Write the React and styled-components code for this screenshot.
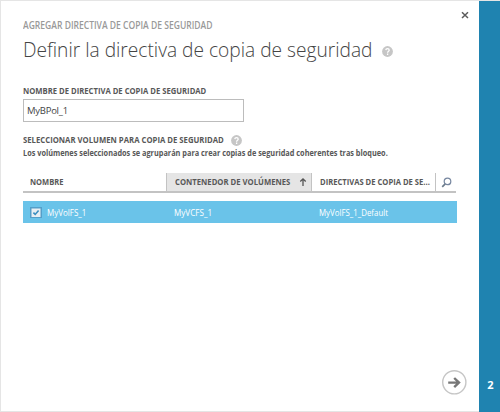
import React from 'react';
import styled, { createGlobalStyle } from 'styled-components';

const GlobalStyle = createGlobalStyle`
  * { box-sizing: border-box; }
  body { margin: 0; background: #fff; font-family: "Open Sans", "Noto Sans", sans-serif; color: #585858; }
`;

const Dialog = styled.div`
  display: flex;
  width: 500px;
  height: 412px;
  overflow: hidden;
  background: #fff;
  border-top: 1px solid #e5e5e5;
`;

const Main = styled.main`
  position: relative;
  flex: 1;
  min-width: 0;
  display: flex;
  flex-direction: column;
  padding: 17px 22px 0 22px;
  border: solid #e5e5e5;
  border-width: 0 0 1px 1px;
`;

const StepRail = styled.aside`
  width: 21px;
  display: flex;
  align-items: flex-end;
  justify-content: center;
  padding: 0 0 19px 2px;
  background: #1f83b0;
  color: #fff;
  font-size: 11px;
  line-height: 16px;
  font-weight: 700;
`;

/* Condensed run of text: $scale narrows the glyphs, $width is the room kept for it. */
const Fit = styled.span`
  display: inline-block;
  width: ${p => (p.$width ? `${p.$width}px` : 'auto')};
  white-space: nowrap;
  transform-origin: 0 50%;
  transform: scaleX(${p => p.$scale || 1});
`;

const Eyebrow = styled.div`
  height: 14px;
  font-size: 10px;
  line-height: 14px;
  font-weight: 600;
  color: #999;
`;

const Title = styled.h1`
  display: flex;
  align-items: center;
  height: 32px;
  margin: 1px 0 0;
  font-size: 21px;
  line-height: 32px;
  font-weight: 300;
  color: #444;

  svg { margin-top: 5px; }
`;

const Label = styled.label`
  height: 14px;
  margin-top: ${p => p.$top}px;
  display: flex;
  align-items: center;
  gap: 7px;
  font-size: 8px;
  line-height: 14px;
  font-weight: 700;
`;

const NameInput = styled.input`
  width: 221px;
  height: 23px;
  margin-top: 1px;
  padding: 0 3px;
  border: 1px solid #bcbcbc;
  border-radius: 0;
  outline: 0;
  font: 9.5px "Open Sans", sans-serif;
  letter-spacing: -0.25px;
  color: #444;
`;

const Hint = styled.p`
  margin: 0;
  height: 12px;
  font-size: 8px;
  line-height: 12px;
  font-weight: 700;
`;

const HeaderRow = styled.div`
  display: grid;
  grid-template-columns: 143px 146px 123px 21px;
  width: 433px;
  height: 20px;
  margin-top: 14px;
  border-bottom: 2px solid #c3c3c3;
`;

const HeaderCell = styled.div`
  display: flex;
  align-items: center;
  justify-content: space-between;
  padding: 0 4px 0 ${p => p.$left}px;
  background: ${p => (p.$sorted ? '#e5e5e5' : 'transparent')};
  border: solid #c3c3c3;
  border-width: 0 ${p => (p.$sorted ? 1 : 0)}px 0 ${p => (p.$divided ? 1 : 0)}px;
  font-size: 8px;
  line-height: 18px;
  font-weight: 700;
  white-space: nowrap;

  svg { flex: none; }
`;

const DataRow = styled.div`
  display: grid;
  grid-template-columns: 143px 145px 1fr;
  width: 434px;
  height: 22px;
  margin-top: 8px;
  background: #6ac3e9;
  color: #fff;
`;

const DataCell = styled.div`
  display: flex;
  align-items: center;
  gap: 5px;
  padding: 1px 0 0 ${p => p.$left}px;
  font-size: 9px;
  line-height: 20px;
`;

const CloseButton = styled.button`
  position: absolute;
  top: 9px;
  right: 9px;
  width: 10px;
  height: 10px;
  padding: 0;
  border: 0;
  background: none;
  line-height: 0;
`;

const NextButton = styled.button`
  align-self: flex-end;
  width: 26px;
  height: 26px;
  margin: auto -10px 16px 0;
  padding: 0;
  border: 0;
  background: none;
  line-height: 0;
`;

const HelpIcon = () => (
  <svg width="11" height="11" viewBox="0 0 11 11">
    <circle cx="5.5" cy="5.5" r="5.4" fill="#c6c6c6" />
    <path d="M3.8 4.1C3.9 2.2 7.2 2.2 7.2 4.2C7.2 5.3 5.6 5.3 5.6 6.7M5.6 7.5V8.9" fill="none" stroke="#fff" strokeWidth="1.3" />
  </svg>
);

const CloseIcon = () => (
  <svg width="10" height="10" viewBox="0 0 10 10">
    <path d="M2 2.2L8 8M8 2.2L2 8" stroke="#5c5c5c" strokeWidth="1.5" />
  </svg>
);

const SortIcon = () => (
  <svg width="8" height="10" viewBox="0 0 8 10">
    <path d="M4 9V2M1.3 4.5L4 1.8L6.7 4.5" fill="none" stroke="#555" strokeWidth="1.3" />
  </svg>
);

const SearchIcon = () => (
  <svg width="11" height="11" viewBox="0 0 11 11">
    <circle cx="6.5" cy="4.4" r="3.3" fill="none" stroke="#7787a0" strokeWidth="1.2" />
    <path d="M4.2 6.8L1.2 9.8" stroke="#6d7c8c" strokeWidth="1.7" />
  </svg>
);

const CheckIcon = () => (
  <svg width="12" height="12" viewBox="0 0 12 12">
    <rect width="12" height="11" fill="#559fc9" />
    <rect x="1.5" y="1.5" width="9" height="8.5" fill="#e9eff3" />
    <path d="M3.4 5.6L5.2 7.4L8.6 3.4" fill="none" stroke="#3b8fc0" strokeWidth="1.6" />
  </svg>
);

const NextIcon = () => (
  <svg width="26" height="26" viewBox="0 0 26 26">
    <circle cx="13.3" cy="13.3" r="11.6" fill="#fff" stroke="#c6c6c6" strokeWidth="1.4" />
    <path d="M7.2 13.6H18M13.2 9L18 13.6L13.2 18.2" fill="none" stroke="#777" strokeWidth="2.4" />
  </svg>
);

export default function App() {
  return (
    <>
      <GlobalStyle />
      <Dialog>
        <Main>
          <CloseButton aria-label="Cerrar"><CloseIcon /></CloseButton>
          <Eyebrow><Fit $scale={0.855}>AGREGAR DIRECTIVA DE COPIA DE SEGURIDAD</Fit></Eyebrow>
          <Title>
            <Fit $width={359} $scale={0.912}>Definir la directiva de copia de seguridad</Fit>
            <HelpIcon />
          </Title>
          <Label $top={19}><Fit $scale={0.958}>NOMBRE DE DIRECTIVA DE COPIA DE SEGURIDAD</Fit></Label>
          <NameInput defaultValue="MyBPol_1" />
          <Label $top={11}><Fit $width={201} $scale={0.966}>SELECCIONAR VOLUMEN PARA COPIA DE SEGURIDAD</Fit><HelpIcon /></Label>
          <Hint><Fit $scale={0.917}>Los volúmenes seleccionados se agruparán para crear copias de seguridad coherentes tras bloqueo.</Fit></Hint>
          <HeaderRow>
            <HeaderCell $left={7}><Fit $scale={0.94}>NOMBRE</Fit></HeaderCell>
            <HeaderCell $left={8} $sorted $divided><Fit $width={116} $scale={0.963}>CONTENEDOR DE VOLÚMENES</Fit><SortIcon /></HeaderCell>
            <HeaderCell $left={8}><Fit $width={110} $scale={0.952}>DIRECTIVAS DE COPIA DE SE...</Fit></HeaderCell>
            <HeaderCell $left={5} $divided><SearchIcon /></HeaderCell>
          </HeaderRow>
          <DataRow>
            <DataCell $left={7}><CheckIcon /><Fit $scale={0.89}>MyVolFS_1</Fit></DataCell>
            <DataCell $left={8}><Fit $scale={0.9}>MyVCFS_1</Fit></DataCell>
            <DataCell $left={8}><Fit $scale={0.875}>MyVolFS_1_Default</Fit></DataCell>
          </DataRow>
          <NextButton aria-label="Siguiente"><NextIcon /></NextButton>
        </Main>
        <StepRail>2</StepRail>
      </Dialog>
    </>
  );
}
